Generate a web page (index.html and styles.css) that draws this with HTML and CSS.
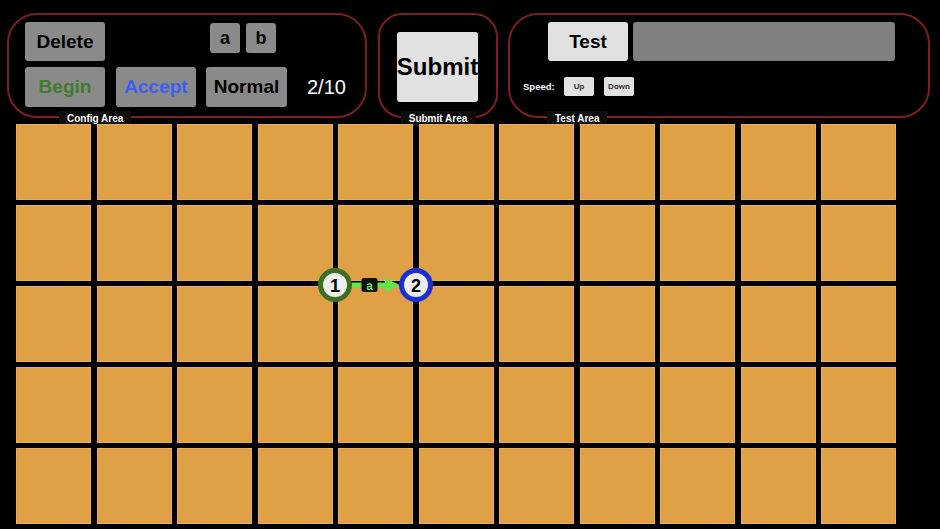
FILE: index.html
```html
<!DOCTYPE html>
<html>
<head>
<meta charset="utf-8">
<link rel="stylesheet" href="styles.css">
</head>
<body>
<div class="top">
  <section class="panel config">
    <div class="row row1">
      <button class="btn gray big">Delete</button>
      <div class="letters">
        <button class="btn gray letter">a</button>
        <button class="btn gray letter">b</button>
      </div>
    </div>
    <div class="row row2">
      <button class="btn gray big begin">Begin</button>
      <button class="btn gray big accept">Accept</button>
      <button class="btn gray big normal">Normal</button>
      <span class="count">2/10</span>
    </div>
    <span class="legend legend-config">Config Area</span>
  </section>
  <section class="panel submit">
    <button class="btn light submit-btn">Submit</button>
    <span class="legend legend-submit">Submit Area</span>
  </section>
  <section class="panel test">
    <div class="row test-row1">
      <button class="btn light big">Test</button>
      <div class="tape"></div>
    </div>
    <div class="row test-row2">
      <span class="speed">Speed:</span>
      <button class="btn light tiny">Up</button>
      <button class="btn light tiny">Down</button>
    </div>
    <span class="legend legend-test">Test Area</span>
  </section>
</div>

<div class="board">
  <div class="cell"></div><div class="cell"></div><div class="cell"></div><div class="cell"></div><div class="cell"></div><div class="cell"></div><div class="cell"></div><div class="cell"></div><div class="cell"></div><div class="cell"></div><div class="cell"></div>
  <div class="cell"></div><div class="cell"></div><div class="cell"></div><div class="cell"></div><div class="cell"></div><div class="cell"></div><div class="cell"></div><div class="cell"></div><div class="cell"></div><div class="cell"></div><div class="cell"></div>
  <div class="cell"></div><div class="cell"></div><div class="cell"></div><div class="cell"></div><div class="cell"></div><div class="cell"></div><div class="cell"></div><div class="cell"></div><div class="cell"></div><div class="cell"></div><div class="cell"></div>
  <div class="cell"></div><div class="cell"></div><div class="cell"></div><div class="cell"></div><div class="cell"></div><div class="cell"></div><div class="cell"></div><div class="cell"></div><div class="cell"></div><div class="cell"></div><div class="cell"></div>
  <div class="cell"></div><div class="cell"></div><div class="cell"></div><div class="cell"></div><div class="cell"></div><div class="cell"></div><div class="cell"></div><div class="cell"></div><div class="cell"></div><div class="cell"></div><div class="cell"></div>

  <svg class="automaton" width="130" height="40" viewBox="0 0 130 40">
    <line x1="42" y1="20" x2="80" y2="20" stroke="#5fe64a" stroke-width="5"/>
    <polygon points="75,13 90,20 75,27" fill="#5fe64a"/>
    <rect x="51.5" y="13" width="16" height="14" rx="2" fill="#111"/>
    <text x="59.5" y="24.5" class="edge-label">a</text>
    <circle cx="25" cy="20" r="14.5" fill="#efefef" stroke="#3e6e1f" stroke-width="5"/>
    <text x="25" y="26.5" class="node-num">1</text>
    <circle cx="106" cy="20" r="14.5" fill="#efefef" stroke="#1b2fd4" stroke-width="5"/>
    <text x="106" y="26.5" class="node-num">2</text>
  </svg>
</div>
</body>
</html>
```

FILE: styles.css
```css
html, body {
  margin: 0;
  padding: 0;
  background: #000;
  font-family: "Liberation Sans", Arial, sans-serif;
  overflow: hidden;
}

.top {
  display: flex;
  gap: 10px;
  padding: 13px 0 0 7px;
}

.panel {
  position: relative;
  box-sizing: border-box;
  height: 105px;
  border: 2px solid #7e1d22;
  border-radius: 30px;
}

.config {
  width: 360px;
  margin-right: 1px;
  padding: 7px 0 0 16px;
}

.submit {
  width: 120px;
  border-radius: 24px;
  padding: 17px 0 0 17px;
}

.test {
  width: 422px;
  padding: 7px 0 0 38px;
}

.row {
  display: flex;
  align-items: center;
}

.row1 {
  align-items: flex-start;
}

.row2 {
  margin-top: 6px;
}

.letters {
  display: flex;
  gap: 6px;
  margin-left: 105px;
  margin-top: 1px;
}

.btn {
  box-sizing: border-box;
  border: none;
  padding: 0;
  margin: 0;
  border-radius: 3px;
  font-family: "Liberation Sans", Arial, sans-serif;
  font-weight: bold;
  color: #000;
  display: flex;
  align-items: center;
  justify-content: center;
  white-space: nowrap;
}

.gray {
  background: #8a8a8a;
}

.light {
  background: #e1e1e1;
}

.big {
  width: 80px;
  height: 39px;
  font-size: 19px;
}

.row2 .big {
  height: 40px;
  margin-right: 11px;
}

.row2 .normal {
  width: 81px;
  margin-right: 20px;
}

.row2 .accept {
  margin-right: 10px;
}

.begin {
  color: #3f7d2c;
}

.accept {
  color: #3d5ef2;
}

.letter {
  width: 30px;
  height: 30px;
  font-size: 18px;
}

.count {
  color: #fff;
  font-size: 20px;
}

.submit-btn {
  width: 81px;
  height: 70px;
  font-size: 24px;
  overflow: visible;
}

.tape {
  width: 262px;
  height: 39px;
  margin-left: 5px;
  background: #808080;
  border-radius: 3px;
}

.test-row2 {
  margin-top: 16px;
  margin-left: -25px;
}

.speed {
  color: #fff;
  font-weight: bold;
  font-size: 9.5px;
  width: 41px;
}

.tiny {
  width: 30px;
  height: 19px;
  font-size: 8px;
  font-weight: bold;
  color: #333;
  border-radius: 2px;
  margin-right: 10px;
}

.legend {
  position: absolute;
  top: 96px;
  height: 15px;
  line-height: 15px;
  padding: 0 8px;
  background: #0e0e0e;
  color: #fff;
  font-size: 10px;
  font-weight: bold;
  white-space: nowrap;
}

.legend-config {
  left: 50px;
}

.legend-submit {
  left: 50%;
  transform: translateX(-50%);
}

.legend-test {
  left: 37px;
}

.board {
  position: relative;
  margin: 6px 0 0 16px;
  width: 880px;
  display: grid;
  grid-template-columns: repeat(11, 1fr);
  grid-auto-rows: 76px;
  column-gap: 5.5px;
  row-gap: 5px;
}

.cell {
  background: #dfa046;
  box-shadow: inset 0 0 0 1px #e6ad5c;
}

.automaton {
  position: absolute;
  left: 294px;
  top: 141px;
}

.node-num {
  font-family: "Liberation Sans", Arial, sans-serif;
  font-weight: bold;
  font-size: 18px;
  text-anchor: middle;
  fill: #000;
}

.edge-label {
  font-family: "Liberation Sans", Arial, sans-serif;
  font-weight: bold;
  font-size: 12px;
  text-anchor: middle;
  fill: #66dd55;
}
```
